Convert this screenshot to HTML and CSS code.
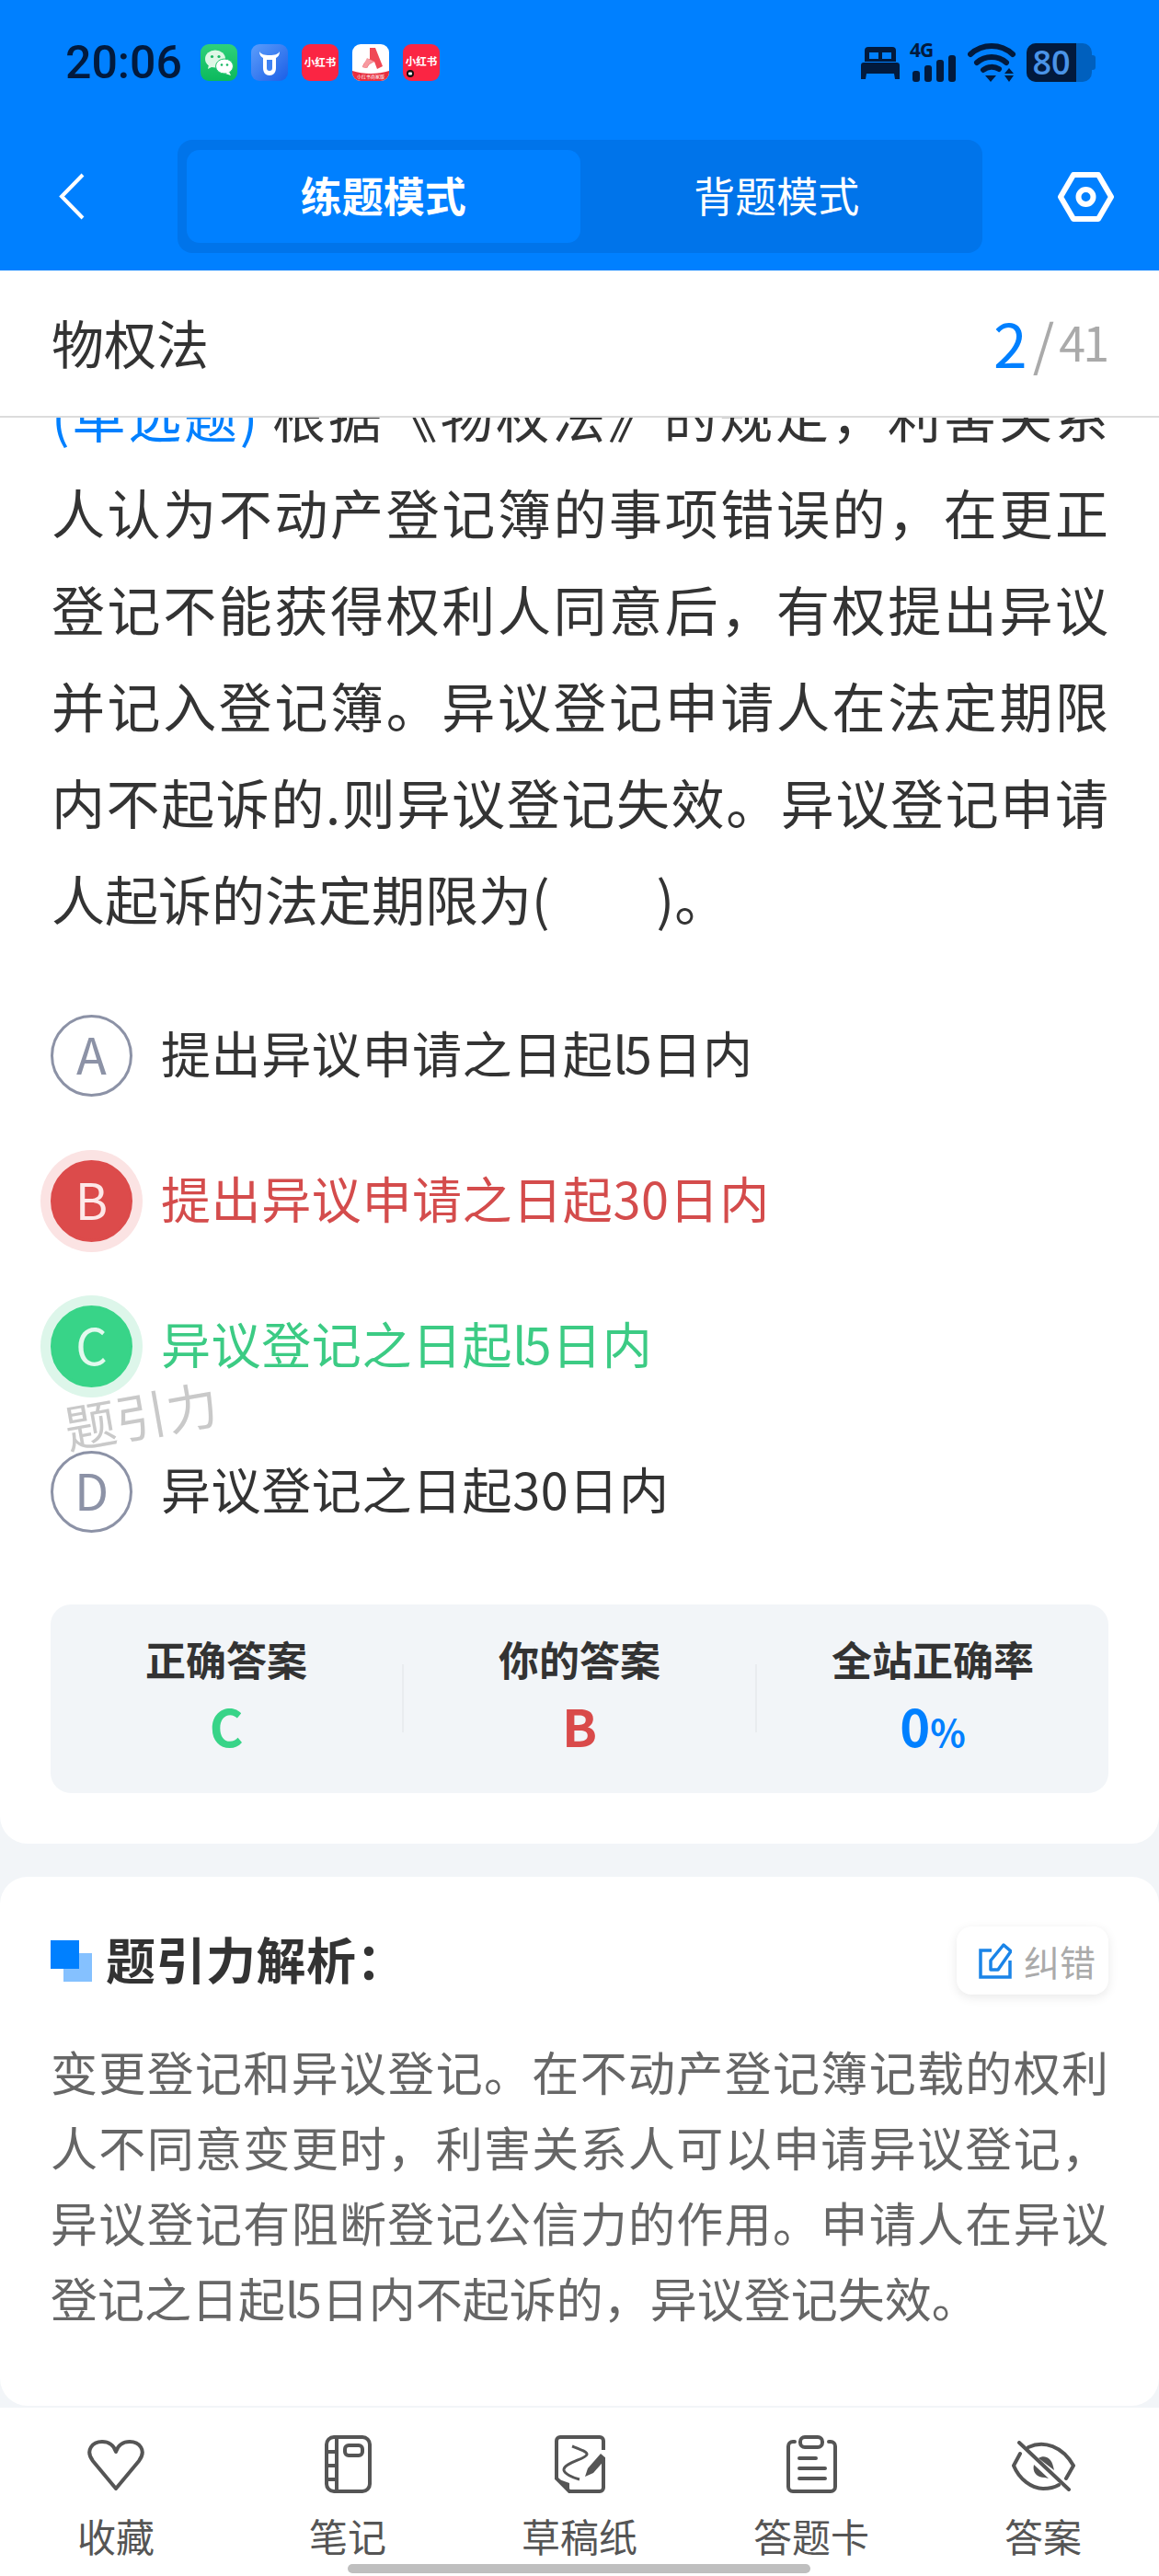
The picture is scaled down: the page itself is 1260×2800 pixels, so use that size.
FILE: index.html
```html
<!DOCTYPE html>
<html lang="zh-CN">
<head>
<meta charset="utf-8">
<title>物权法</title>
<link rel="stylesheet" href="styles.css">
</head>
<body>
<div class="app">
  <header class="top">
    <div class="status">
      <span class="time">20:06</span>
      <div class="apps">
        <svg class="app-icon" viewBox="0 0 40 40">
          <defs><linearGradient id="wx" x1="0" y1="0" x2="0" y2="1"><stop offset="0" stop-color="#2fd07a"/><stop offset="1" stop-color="#0cb95c"/></linearGradient></defs>
          <rect width="40" height="40" rx="9" fill="url(#wx)"/>
          <ellipse cx="16" cy="16" rx="11" ry="9.5" fill="#dff7e6"/>
          <path d="M9 22l-1 5 6-3z" fill="#dff7e6"/>
          <ellipse cx="26" cy="24" rx="9.5" ry="8" fill="#fff" stroke="#27c872" stroke-width="1"/>
          <path d="M31 30l2 4-6-2z" fill="#fff"/>
          <circle cx="12.500" cy="13.500" r="1.600" fill="#1bb865"/><circle cx="20" cy="13.500" r="1.600" fill="#1bb865"/>
          <circle cx="23" cy="22.500" r="1.300" fill="#1bb865"/><circle cx="29" cy="22.500" r="1.300" fill="#1bb865"/>
        </svg>
        <svg class="app-icon" viewBox="0 0 40 40">
          <defs><linearGradient id="ox" x1="0" y1="0" x2="1" y2="1"><stop offset="0" stop-color="#5b9dfb"/><stop offset="1" stop-color="#1c5fe6"/></linearGradient></defs>
          <rect width="40" height="40" rx="9" fill="url(#ox)"/>
          <path d="M9 8c0 4 2 6 4 7v11c0 5 3 8 7 8s7-3 7-8V15c2-1 4-3 4-7-2 3-5 4-11 4S11 11 9 8z" fill="#fff"/>
          <path d="M17 17h6v9c0 2-1 3-3 3s-3-1-3-3z" fill="#3f82f3"/>
        </svg>
        <svg class="app-icon" viewBox="0 0 40 40">
          <rect width="40" height="40" rx="9" fill="#fb2543"/>
          <text class="xhs" x="20" y="24" text-anchor="middle">小红书</text>
        </svg>
        <svg class="app-icon" viewBox="0 0 40 40">
          <rect width="40" height="40" rx="9" fill="#fff"/>
          <path d="M0 29c12 4 28 4 40 0v2a9 9 0 0 1-9 9H9a9 9 0 0 1-9-9z" fill="#e8303f"/>
          <path d="M19 4h6l8 20-6 3-3-8-4 2c-2 1-3 3-4 5l-5-1c1-4 4-8 8-9z" fill="#f04855"/>
          <path d="M16 15l8 4c-4 1-7 3-8 7l-5-1z" fill="#f79aa0"/>
          <text class="xhs-tiny" x="20" y="37" text-anchor="middle">小红书商家版</text>
        </svg>
        <svg class="app-icon" viewBox="0 0 40 40">
          <rect width="40" height="40" rx="9" fill="#fb2543"/>
          <text class="xhs" x="20" y="23" text-anchor="middle">小红书</text>
          <circle cx="8" cy="32" r="4" fill="#111"/><rect x="6" y="30.500" width="4" height="3" rx="1" fill="#fff"/>
        </svg>
      </div>
      <div class="sys">
        <svg class="ic-bed" viewBox="0 0 42 35">
          <path d="M8 0h26a4 4 0 0 1 4 4v12H4V4a4 4 0 0 1 4-4z" fill="#021a3d"/>
          <rect x="9" y="6" width="10" height="7" fill="#0080ff"/><rect x="23" y="6" width="10" height="7" fill="#0080ff"/>
          <path d="M3 17h36a3 3 0 0 1 3 3v15h-5l-1-6H6l-1 6H0V20a3 3 0 0 1 3-3z" fill="#021a3d"/>
        </svg>
        <div class="signal">
          <span class="net">4G</span>
          <div class="bars"><i class="b1"></i><i class="b2"></i><i class="b3"></i><i class="b4"></i></div>
        </div>
        <svg class="ic-wifi" viewBox="0 0 53 42">
          <g fill="none" stroke="#021a3d" stroke-width="6" stroke-linecap="round">
            <path d="M3 12C16 0 36 0 49 12"/>
            <path d="M10 21c9-8 23-8 32 0"/>
            <path d="M17 29c5-4 12-4 17-1"/>
          </g>
          <path d="M19 35h12l-6 7z" fill="#021a3d"/>
          <path d="M45 27l5 6H40zM40 35h10l-5 7z" fill="#021a3d"/>
        </svg>
        <div class="battery"><div class="level">80</div></div>
      </div>
    </div>
    <nav class="nav">
      <svg class="ic-back" viewBox="0 0 28 51"><path d="M26 2L3 25.500 26 49" fill="none" stroke="#fff" stroke-width="4"/></svg>
      <div class="tabs">
        <div class="tab tab-on">练题模式</div>
        <div class="tab">背题模式</div>
      </div>
      <svg class="ic-hex" viewBox="0 0 61 54">
        <path d="M3 27L17 3h27l14 24-14 24H17z" fill="none" stroke="#fff" stroke-width="6" stroke-linejoin="round"/>
        <circle cx="30.500" cy="27" r="8" fill="none" stroke="#fff" stroke-width="6"/>
      </svg>
    </nav>
  </header>

  <div class="subhead">
    <h1 class="subject">物权法</h1>
    <div class="count"><span class="cur">2</span><span class="sl">/</span><span class="tot">41</span></div>
  </div>

  <main class="scroll">
    <div class="scroll-in">
      <section class="card card-q">
        <p class="question"><span class="qtype">(单选题)</span> 根据《物权法》的规定，利害关系人认为不动产登记簿的事项错误的，在更正登记不能获得权利人同意后，有权提出异议并记入登记簿。异议登记申请人在法定期限内不起诉的.则异议登记失效。异议登记申请人起诉的法定期限为(　　)。</p>
        <ul class="options">
          <li class="opt"><span class="mark">A</span><span class="opt-t">提出异议申请之日起<span class="ell">l</span>5日内</span></li>
          <li class="opt opt-bad"><span class="mark">B</span><span class="opt-t">提出异议申请之日起30日内</span></li>
          <li class="opt opt-ok"><span class="mark">C</span><span class="opt-t">异议登记之日起<span class="ell">l</span>5日内</span></li>
          <li class="opt"><span class="mark">D</span><span class="opt-t">异议登记之日起30日内</span></li>
        </ul>
        <div class="stats">
          <div class="stat"><div class="stat-l">正确答案</div><div class="stat-v v-ok">C</div></div>
          <div class="stat-sep"></div>
          <div class="stat"><div class="stat-l">你的答案</div><div class="stat-v v-bad">B</div></div>
          <div class="stat-sep"></div>
          <div class="stat"><div class="stat-l">全站正确率</div><div class="stat-v v-rate">0<small>%</small></div></div>
        </div>
      </section>
      <section class="card card-a">
        <div class="a-head">
          <div class="a-title">
            <span class="squares"><i class="sq-light"></i><i class="sq-dark"></i></span>
            <h2>题引力解析：</h2>
          </div>
          <div class="fix">
            <svg class="ic-edit" viewBox="0 0 36 40">
              <path d="M14 9H2v29h32V20" fill="none" stroke="#1a84e8" stroke-width="3.500"/>
              <path d="M13 30V20L27 3l8 7-14 20z" fill="none" stroke="#1a84e8" stroke-width="3.500" stroke-linejoin="round"/>
            </svg>
            <span>纠错</span>
          </div>
        </div>
        <p class="analysis">变更登记和异议登记。在不动产登记簿记载的权利人不同意变更时，利害关系人可以申请异议登记，异议登记有阻断登记公信力的作用。申请人在异议登记之日起<span class="ell">l</span>5日内不起诉的，异议登记失效。</p>
      </section>
    </div>
  </main>

  <footer class="bottom">
    <div class="item">
      <span class="item-ic"><svg class="i-heart" viewBox="0 0 64 56"><path d="M32 53L7 23C-2 11 7 2 17 2c7 0 13 4 15 11 2-7 8-11 15-11 10 0 19 9 10 21z" fill="none" stroke="#555" stroke-width="4" stroke-linejoin="round"/></svg></span>
      <span class="item-l">收藏</span>
    </div>
    <div class="item">
      <span class="item-ic"><svg class="i-note" viewBox="0 0 51 63"><g fill="none" stroke="#555" stroke-width="4"><rect x="2" y="2" width="47" height="59" rx="8"/><path d="M13 2v59M2 18h11M2 33h11M2 48h11"/><rect x="22" y="11" width="19" height="11" rx="4"/></g></svg></span>
      <span class="item-l">笔记</span>
    </div>
    <div class="item">
      <span class="item-ic"><svg class="i-draft" viewBox="0 0 55 63">
        <path d="M53 16V6a4 4 0 0 0-4-4H6a4 4 0 0 0-4 4v41l14 14h33a4 4 0 0 0 4-4V27" fill="none" stroke="#555" stroke-width="4"/>
        <path d="M2 47l14 5v9z" fill="#555"/>
        <path d="M19 12c8 3 17 6 16 9-1 5-26 9-25 17 1 4 9 8 17 10" fill="none" stroke="#555" stroke-width="3"/>
        <path d="M33 45l3-9 14-16 6 5-14 16z" fill="#555"/>
      </svg></span>
      <span class="item-l">草稿纸</span>
    </div>
    <div class="item">
      <span class="item-ic"><svg class="i-clip" viewBox="0 0 55 63"><g fill="none" stroke="#555" stroke-width="4" stroke-linecap="round"><path d="M9 7H7a5 5 0 0 0-5 5v44a5 5 0 0 0 5 5h41a5 5 0 0 0 5-5V12a5 5 0 0 0-5-5h-2"/><rect x="15" y="2" width="24" height="11" rx="5"/><path d="M14 25h18M14 36h28M14 47h28"/></g></svg></span>
      <span class="item-l">答题卡</span>
    </div>
    <div class="item">
      <span class="item-ic"><svg class="i-eye" viewBox="0 0 69 55"><g fill="none" stroke="#555" stroke-width="4" stroke-linecap="round"><path d="M9 14L2 27c6 15 20 25 32 25 6 0 12-1 17-4"/><path d="M18 7c17-8 37-1 49 20l-8 14"/><path d="M8 2l54 51"/></g><path d="M29 19c6-4 14-1 16 9l1 4zM24 26c-2 8 3 14 12 14l4 1z" fill="#555"/></svg></span>
      <span class="item-l">答案</span>
    </div>
  </footer>

  <div class="watermark">题引力</div>
  <div class="home-bar"></div>
</div>
</body>
</html>
```

FILE: styles.css
```css
* { box-sizing: border-box; }
html, body { margin: 0; padding: 0; }
body { background: #f2f5f8; font-family: "Noto Sans CJK SC", "Noto Sans", sans-serif; color: #333; }
h1, h2, p, ul { margin: 0; padding: 0; }
ul { list-style: none; }

.app { position: relative; width: 1260px; height: 2800px; overflow: hidden; display: flex; flex-direction: column; background: #f2f5f8; }

/* top */
.top { flex: none; height: 294px; background: #0080ff; padding-top: 47px; }
.status { display: flex; align-items: center; height: 42px; padding-left: 71px; }
.time { font-family: Roboto, sans-serif; font-weight: 500; font-size: 50px; line-height: 42px; color: #021a3d; width: 147px; }
.apps { display: flex; gap: 15px; }
.app-icon { display: block; width: 40px; height: 40px; }
.xhs { font-family: "Noto Sans CJK SC", sans-serif; font-size: 11.500px; font-weight: 700; fill: #fff; }
.xhs-tiny { font-family: "Noto Sans CJK SC", sans-serif; font-size: 5px; fill: #fff; }
.sys { display: flex; align-items: center; margin-left: auto; margin-right: 73px; }
.ic-bed { display: block; width: 42px; height: 35px; margin-right: 12px; }
.signal { position: relative; width: 49px; height: 42px; margin-right: 13px; }
.net { position: absolute; left: -1px; top: -5px; font-family: "Open Sans", sans-serif; font-weight: 700; font-size: 21px; line-height: 24px; letter-spacing: -1px; color: #021a3d; }
.bars { position: absolute; left: 2px; right: 0; bottom: 0; display: flex; align-items: flex-end; gap: 5px; }
.bars i { display: block; width: 8px; border-radius: 3px; background: #021a3d; }
.b1 { height: 12px; }
.b2 { height: 18px; }
.b3 { height: 24px; }
.b4 { height: 29px; }
.ic-wifi { display: block; width: 53px; height: 42px; margin-right: 11px; }
.battery { position: relative; width: 71px; height: 42px; background: #0060be; border-radius: 10px; }
.battery::after { content: ""; position: absolute; right: -4px; top: 13px; width: 4px; height: 16px; background: #0060be; border-radius: 0 3px 3px 0; }
.level { width: 54px; height: 42px; background: #021a3d; border-radius: 10px 0 0 10px; color: #4a94e8; font-family: "Open Sans", sans-serif; font-weight: 600; font-size: 36px; line-height: 42px; text-align: center; }

.nav { display: flex; align-items: center; margin-top: 63px; height: 123px; padding-left: 64px; }
.ic-back { display: block; flex: none; width: 28px; height: 51px; }
.tabs { flex: none; display: flex; width: 875px; height: 123px; margin-left: 101px; padding: 11px 10px; background: #0074ea; border-radius: 16px; }
.tab { flex: 1; border-radius: 14px; color: #fff; font-size: 45px; line-height: 97px; text-align: center; }
.tab-on { background: #0080ff; font-weight: 700; }
.ic-hex { display: block; flex: none; width: 61px; height: 54px; margin-left: 82px; }

/* subheader */
.subhead { flex: none; position: relative; z-index: 2; display: flex; align-items: center; justify-content: space-between; height: 160px; padding: 0 57px 4px 56px; background: #fff; border-bottom: 2px solid #dcdcdc; }
.subject { font-weight: 400; font-size: 57px; line-height: 78px; color: #333; }
.count { display: flex; align-items: center; color: #aaa; }
.cur { color: #0080ff; font-size: 66px; line-height: 80px; }
.sl { font-size: 60px; line-height: 80px; margin: 0 5px 0 6px; }
.tot { font-size: 52px; line-height: 80px; letter-spacing: -3px; }

/* scrolled content */
.scroll { flex: 1; min-height: 0; overflow: hidden; }
.scroll-in { margin-top: -55px; display: flex; flex-direction: column; gap: 36px; }
.card { background: #fff; padding-left: 55px; padding-right: 55px; }
.card-q { padding-bottom: 55px; border-radius: 0 0 30px 30px; }
.card-a { padding-top: 54px; padding-bottom: 77px; border-radius: 30px; }

.question { font-size: 58px; line-height: 105px; padding-left: 1px; text-align: justify; color: #333; }
.qtype { color: #0080ff; }

.options { margin-top: 74px; display: flex; flex-direction: column; gap: 69px; }
.opt { display: flex; align-items: center; gap: 31px; height: 89px; }
.mark { flex: none; width: 89px; height: 89px; border: 3px solid #8c92a6; border-radius: 50%; color: #8c92a6; font-size: 54px; line-height: 78px; text-align: center; }
.opt-t { font-size: 54px; line-height: 70px; letter-spacing: 0.6px; padding-bottom: 8px; color: #333; }
.ell { letter-spacing: -3px; }
.opt-bad .mark { background: #dc4b4b; border-color: #dc4b4b; color: #fde8e8; box-shadow: 0 0 0 11px #fbe3e3; }
.opt-bad .opt-t { color: #d44c4c; }
.opt-ok .mark { background: #38d488; border-color: #38d488; color: #e2f9ee; box-shadow: 0 0 0 11px #ddf6ea; }
.opt-ok .opt-t { color: #3ccb84; }

.stats { display: flex; margin-top: 78px; height: 205px; background: #f2f5f8; border-radius: 22px; }
.stat { flex: 1; text-align: center; padding-top: 31px; }
.stat-l { font-size: 44px; font-weight: 700; line-height: 56px; color: #333; }
.stat-v { font-size: 56px; font-weight: 700; line-height: 78px; margin-top: 5px; }
.stat-v small { font-size: 40px; }
.stat-sep { flex: none; width: 2px; height: 74px; margin-top: 65px; background: #e9ecef; }
.v-ok { color: #38d488; }
.v-bad { color: #d94a4a; }
.v-rate { color: #0080ff; }

.a-head { display: flex; align-items: center; justify-content: space-between; height: 74px; }
.a-title { display: flex; align-items: center; gap: 15px; }
.squares { position: relative; display: block; width: 45px; height: 45px; }
.squares i { position: absolute; display: block; width: 31px; height: 31px; }
.sq-light { left: 14px; top: 14px; background: #85c1ff; }
.sq-dark { left: 0; top: 0; background: #0080ff; }
.a-title h2 { font-size: 54px; font-weight: 700; line-height: 70px; padding-bottom: 4px; letter-spacing: 0.5px; color: #333; }
.fix { display: flex; align-items: center; gap: 13px; height: 74px; width: 165px; padding-left: 24px; background: #fff; border-radius: 16px; box-shadow: 0 3px 12px rgba(0, 0, 0, 0.09); color: #aaa; font-size: 39px; }
.ic-edit { display: block; flex: none; width: 36px; height: 40px; }
.analysis { margin-top: 42px; font-size: 51px; line-height: 82px; text-align: justify; color: #666; }

/* bottom */
.bottom { flex: none; display: flex; height: 183px; background: #fff; padding-top: 29px; }
.item { flex: 1; display: flex; flex-direction: column; align-items: center; }
.item-ic { display: flex; align-items: center; justify-content: center; height: 64px; }
.item-ic svg { display: block; }
.i-heart { width: 64px; height: 56px; margin-top: 4px; }
.i-note { width: 51px; height: 63px; }
.i-draft { width: 55px; height: 63px; }
.i-clip { width: 55px; height: 63px; }
.i-eye { width: 69px; height: 55px; margin-top: 4px; }
.item-l { margin-top: 18px; font-size: 42px; line-height: 56px; color: #555; }

.watermark { position: absolute; left: 69px; top: 1501px; transform: rotate(-10deg); font-size: 56px; line-height: 72px; color: #c9c9c9; }
.home-bar { position: absolute; left: 378px; top: 2787px; width: 503px; height: 10px; border-radius: 5px; background: #bfbfbf; }
```
